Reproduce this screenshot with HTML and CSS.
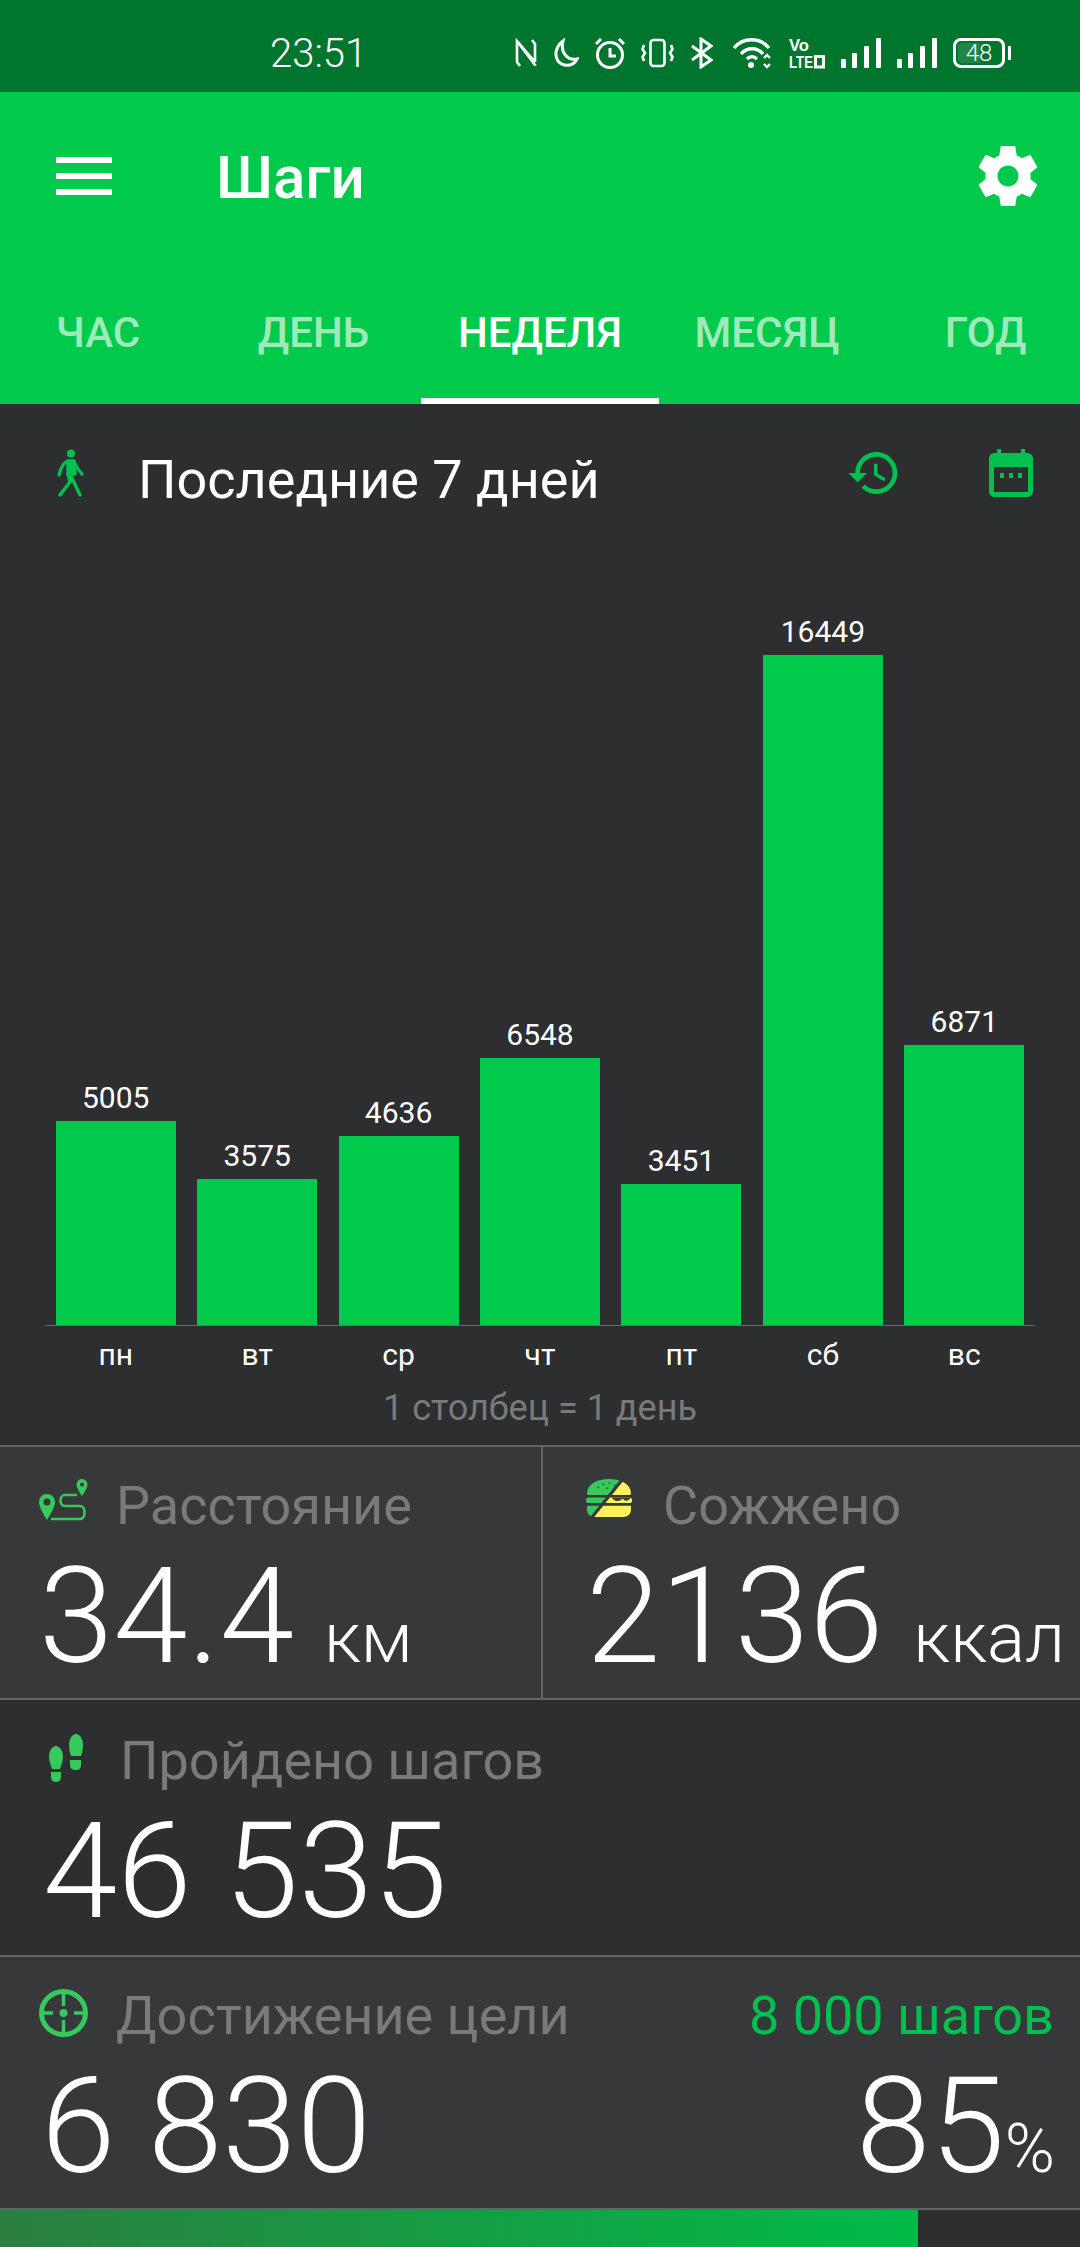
FILE: index.html
```html
<!DOCTYPE html>
<html>
<head>
  <title>Шаги</title>
  <meta charset="utf-8">
  <link rel="stylesheet" href="styles.css">
</head>
<body>
  <div class="status-bar">
    <span class="clock">23:51</span>
    <div class="status-icons">
      <svg width="22" height="30" viewBox="0 0 22 30" fill="none" stroke="#fff" stroke-width="2.6"><path d="M2 6 V24 L5 28 M2 3 L20 27 V28 M20 24 V6 L17 2 M2 8 V3 L20 24"/></svg>
      <svg width="26" height="30" viewBox="0 0 26 30" fill="none" stroke="#fff" stroke-width="3"><path d="M10 3 C3 8 1 17 5 23 C10 29 20 29 24 21 C15 23 7 15 10 3 Z"/></svg>
      <svg width="30" height="32" viewBox="0 0 30 32" fill="none" stroke="#fff" stroke-width="3"><circle cx="15" cy="18" r="12.5"/><path d="M15 11 V19 H21 M1 7 L6 2 M29 7 L24 2"/></svg>
      <svg width="33" height="30" viewBox="0 0 33 30" fill="none" stroke="#fff" stroke-width="2.6"><rect x="9.5" y="2" width="14" height="26" rx="3"/><path d="M3 7 L1.5 11 L4 15 L1.5 19 L3 23 M30 7 L31.5 11 L29 15 L31.5 19 L30 23"/></svg>
      <svg width="23" height="32" viewBox="0 0 23 32" fill="none" stroke="#fff" stroke-width="3"><path d="M2 9 L21 23 L11 30 V2 L21 9 L2 23"/></svg>
      <svg class="wifi-icon" width="40" height="32" viewBox="0 0 40 32" fill="none" stroke="#fff" stroke-width="3.4"><path d="M1 11 C10 0 27 0 36 11 M8 17 C14 10 24 10 30 17 M14 22 C17 19 21 19 24 22"/><circle cx="18" cy="28" r="3" fill="#fff" stroke="none"/><path d="M31 21 L34 18 L37 21 M31 27 L34 30 L37 27" stroke-width="2.4"/></svg>
      <svg width="36" height="40" viewBox="0 -4 36 40"><text x="0" y="14" class="volte" textLength="20" lengthAdjust="spacingAndGlyphs">Vo</text><text x="0" y="31" class="volte" textLength="24" lengthAdjust="spacingAndGlyphs">LTE</text><rect x="26.500" y="19.500" width="8" height="10.500" fill="none" stroke="#fff" stroke-width="3"/></svg>
      <svg width="40" height="32" viewBox="0 0 40 32" fill="#fff"><rect x="0" y="22" width="5" height="9" rx="1"/><rect x="11" y="16" width="5" height="15" rx="1"/><rect x="23" y="9" width="5" height="22" rx="1"/><rect x="35" y="1" width="5" height="30" rx="1"/></svg>
      <svg width="40" height="32" viewBox="0 0 40 32" fill="#fff"><rect x="0" y="22" width="5" height="9" rx="1"/><rect x="11" y="16" width="5" height="15" rx="1"/><rect x="23" y="9" width="5" height="22" rx="1"/><rect x="35" y="1" width="5" height="30" rx="1"/></svg>
      <div class="battery">
        <div class="battery-fill"></div>
        <span class="battery-level">48</span>
      </div>
    </div>
  </div>

  <header class="app-header">
    <div class="toolbar">
      <svg class="menu-icon" width="56" height="38" viewBox="0 0 56 38" fill="#fff"><rect y="0" width="56" height="6"/><rect y="16" width="56" height="6"/><rect y="32" width="56" height="6"/></svg>
      <h1 class="title">Шаги</h1>
      <svg class="gear-icon" width="72" height="72" viewBox="0 0 24 24" fill="#fff"><path d="M19.43 12.98c.04-.32.07-.64.07-.98s-.03-.66-.07-.98l2.11-1.65c.19-.15.24-.42.12-.64l-2-3.46c-.12-.22-.39-.3-.61-.22l-2.49 1c-.52-.4-1.08-.73-1.69-.98l-.38-2.65C14.46 2.18 14.25 2 14 2h-4c-.25 0-.46.18-.49.42l-.38 2.65c-.61.25-1.17.59-1.69.98l-2.49-1c-.23-.09-.49 0-.61.22l-2 3.46c-.13.22-.07.49.12.64l2.11 1.65c-.04.32-.07.65-.07.98s.03.66.07.98l-2.11 1.65c-.19.15-.24.42-.12.64l2 3.46c.12.22.39.3.61.22l2.49-1c.52.4 1.08.73 1.69.98l.38 2.65c.03.24.24.42.49.42h4c.25 0 .46-.18.49-.42l.38-2.65c.61-.25 1.17-.59 1.69-.98l2.49 1c.23.09.49 0 .61-.22l2-3.46c.12-.22.07-.49-.12-.64l-2.11-1.65zM12 15.5c-1.93 0-3.5-1.57-3.5-3.5s1.57-3.5 3.5-3.5 3.5 1.57 3.5 3.5-1.57 3.5-3.5 3.5z"/></svg>
    </div>
    <nav class="tabs">
      <a class="tab tab-hour">ЧАС</a>
      <a class="tab tab-day">ДЕНЬ</a>
      <a class="tab active">НЕДЕЛЯ</a>
      <a class="tab">МЕСЯЦ</a>
      <a class="tab tab-year">ГОД</a>
    </nav>
  </header>

  <section class="chart-panel">
    <div class="range-row">
      <svg class="walk-icon" width="28" height="48" viewBox="0 0 28 48" fill="none" stroke="#00c04f" stroke-width="3.400" stroke-linecap="round" stroke-linejoin="round"><circle cx="15" cy="4.500" r="4" fill="#00c04f" stroke="none"/><path d="M12 12 C8 13 5 18 3 26 M18 13 C20 16 22 21 26 25" stroke-width="3.200"/><path d="M12 12 H18 L19 25 L12 25 Z" fill="#00c04f"/><path d="M12 25 L14 33 L4 46 M15 27 L24 46"/></svg>
      <span class="range-title">Последние 7 дней</span>
      <svg class="history-icon" width="56" height="56" viewBox="0 0 24 24" fill="#00c04f"><path d="M13 3c-4.97 0-9 4.03-9 9H1l3.89 3.89.07.14L9 12H6c0-3.87 3.13-7 7-7s7 3.13 7 7-3.13 7-7 7c-1.93 0-3.68-.79-4.94-2.06l-1.42 1.42C8.27 19.99 10.51 21 13 21c4.97 0 9-4.03 9-9s-4.03-9-9-9zm-1 5v5l4.28 2.54.72-1.21-3.5-2.08V8H12z"/></svg>
      <svg class="calendar-icon" width="44" height="48" viewBox="0 0 44 48" fill="#00c04f"><rect x="2.500" y="6.500" width="39" height="39" rx="3" fill="none" stroke="#00c04f" stroke-width="5"/><rect x="2" y="6" width="40" height="12" rx="3"/><rect x="8" y="0" width="4" height="8"/><rect x="32" y="0" width="4" height="8"/><rect x="11" y="24" width="4" height="5"/><rect x="20" y="24" width="4" height="5"/><rect x="29" y="24" width="4" height="5"/></svg>
    </div>

    <div class="plot">
      <div class="col"><span class="bar-value">5005</span><div class="bar" style="height: 204px"></div></div>
      <div class="col"><span class="bar-value">3575</span><div class="bar" style="height: 146px"></div></div>
      <div class="col"><span class="bar-value">4636</span><div class="bar" style="height: 189px"></div></div>
      <div class="col"><span class="bar-value">6548</span><div class="bar" style="height: 267px"></div></div>
      <div class="col"><span class="bar-value">3451</span><div class="bar" style="height: 141px"></div></div>
      <div class="col"><span class="bar-value">16449</span><div class="bar" style="height: 670px"></div></div>
      <div class="col"><span class="bar-value">6871</span><div class="bar" style="height: 280px"></div></div>
    </div>
    <div class="days">
      <span>пн</span><span>вт</span><span>ср</span><span>чт</span><span>пт</span><span>сб</span><span>вс</span>
    </div>
    <p class="chart-note">1 столбец = 1 день</p>
  </section>

  <section class="stats">
    <div class="stats-row light split">
      <div class="tile tile-distance">
        <div class="tile-head">
          <svg class="tile-icon icon-route" width="49" height="42" viewBox="0 0 49 42" fill="none" stroke="#36c95c" stroke-width="2.600"><path fill-rule="evenodd" fill="#36c95c" stroke="none" d="M8 15 C3.500 15 0 18.500 0 23 C0 29 8 41 8 41 C8 41 16 29 16 23 C16 18.500 12.500 15 8 15 Z M8 19.500 A3.500 3.500 0 1 1 8 26.500 A3.500 3.500 0 1 1 8 19.500 Z"/><path fill-rule="evenodd" fill="#36c95c" stroke="none" d="M43 0 C40 0 37.500 2.500 37.500 5.500 C37.500 9.500 43 17 43 17 C43 17 48.500 9.500 48.500 5.500 C48.500 2.500 46 0 43 0 Z M43 3.500 A2 2 0 1 1 43 7.500 A2 2 0 1 1 43 3.500 Z"/><path d="M38 16 H26 C20 16 20 27 26 27 H41 C47 27 47 40 41 40 H12"/></svg>
          <span class="tile-label">Расстояние</span>
        </div>
        <div class="tile-value">34.4<small class="unit">км</small></div>
      </div>
      <div class="tile tile-burn">
        <div class="tile-head">
          <svg class="tile-icon icon-burger" width="46" height="38" viewBox="0 0 45 37">
            <defs>
              <g id="burger">
                <path d="M1 14 C1 5 11 0 22.500 0 C34 0 44 5 44 14 C44 15 43 15.500 42 15.500 H3 C2 15.500 1 15 1 14 Z"/>
                <rect x="0" y="18" width="45" height="5.500" rx="2.500"/>
                <path d="M1 26 H44 V30 C44 34 41 37 37 37 H8 C4 37 1 34 1 30 Z"/>
              </g>
              <clipPath id="burger-left"><polygon points="0,0 34,0 4,37 0,37"/></clipPath>
              <clipPath id="burger-right"><polygon points="38,0 45,0 45,37 8,37"/></clipPath>
            </defs>
            <use href="#burger" fill="#36c95c" clip-path="url(#burger-left)"/>
            <use href="#burger" fill="#fbf15b" clip-path="url(#burger-right)"/>
            <g fill="#2c5f38"><circle cx="12" cy="8" r="1"/><circle cx="17" cy="5" r="1"/><circle cx="23" cy="4" r="1"/><circle cx="21" cy="9" r="1"/><circle cx="28" cy="6" r="1"/></g>
            <path d="M25 18 C29 23 33 22 36 19 C38 22 41 22 44 18" fill="#37383a"/>
          </svg>
          <span class="tile-label">Сожжено</span>
        </div>
        <div class="tile-value">2136<small class="unit">ккал</small></div>
      </div>
    </div>

    <div class="stats-row stats-row-tall">
      <div class="tile tile-steps">
        <div class="tile-head">
          <svg class="tile-icon icon-feet" width="34" height="48" viewBox="0 0 34 48" fill="#36c95c"><path d="M7 12 C3 12 0 17 0 23 C0 28 2 31 3 35 H11 C12 31 14 28 14 23 C14 17 11 12 7 12 Z"/><path d="M2 38 H12 V43 C12 46 10 48 7 48 C4 48 2 46 2 43 Z"/><path d="M27 0 C23 0 20 5 20 11 C20 16 21 19 22 22 H32 C33 19 34 16 34 11 C34 5 31 0 27 0 Z"/><path d="M21 26 H32 V31 C32 34 30 36 27 36 C23 36 21 34 21 31 Z"/></svg>
          <span class="tile-label">Пройдено шагов</span>
        </div>
        <div class="tile-value">46 535</div>
      </div>
    </div>

    <div class="stats-row light">
      <div class="tile tile-goal">
        <div class="tile-head">
          <svg class="tile-icon icon-target" width="49" height="48" viewBox="0 0 49 48" fill="none" stroke="#36c95c" stroke-width="5"><ellipse cx="24.500" cy="24" rx="22" ry="21.500"/><path d="M24.500 3 V17 M24.500 31 V45 M3 24 H14 M35 24 H46" stroke-width="3.500"/><circle cx="24.500" cy="24" r="4" fill="#36c95c" stroke="none"/></svg>
          <span class="tile-label">Достижение цели</span>
          <span class="goal-target">8 000 шагов</span>
        </div>
        <div class="goal-values">
          <div class="tile-value goal-count">6 830</div>
          <div class="tile-value goal-percent">85<small class="percent">%</small></div>
        </div>
      </div>
    </div>
  </section>

  <div class="progress">
    <div class="progress-fill" style="width: 85%"></div>
  </div>
</body>
</html>
```

FILE: styles.css
```css
html, body {
  margin: 0;
  height: 2247px;
  overflow: hidden;
}

body {
  background-color: #2d2e30;
  color: white;
  font-family: Roboto, "Noto Sans", sans-serif;
}

/* Status bar */
.status-bar {
  height: 92px;
  background-color: #00752e;
  display: flex;
  align-items: center;
  padding-left: 270px;
  padding-right: 75px;
  box-sizing: border-box;
}

.clock {
  font-size: 40px;
  font-weight: 300;
  margin-top: 14px;
}

.status-icons {
  margin-left: auto;
  display: flex;
  align-items: center;
  gap: 16px;
  margin-top: 14px;
}

.wifi-icon {
  margin-left: 4px;
}

.volte {
  font-family: "Liberation Sans", sans-serif;
  font-size: 17px;
  font-weight: bold;
  fill: white;
}

.battery {
  position: relative;
  width: 46px;
  height: 24px;
  border: 3px solid white;
  border-radius: 8px;
  display: flex;
  align-items: center;
  justify-content: center;
}

.battery::after {
  content: "";
  position: absolute;
  right: -9px;
  top: 5px;
  width: 3px;
  height: 14px;
  background-color: white;
}

.battery-fill {
  position: absolute;
  left: 2px;
  top: 2px;
  bottom: 2px;
  width: 48%;
  background-color: #23844a;
  border-radius: 4px 0 0 4px;
}

.battery-level {
  position: relative;
  font-size: 24px;
  font-weight: 300;
}

/* Header and tabs */
.app-header {
  height: 312px;
  background-color: #00c94c;
}

.toolbar {
  height: 168px;
  display: flex;
  align-items: center;
  padding-left: 56px;
  padding-right: 36px;
}

.title {
  margin: 4px 0 0 104px;
  font-size: 60px;
  font-weight: 500;
  line-height: 68px;
}

.gear-icon {
  margin-left: auto;
}

.tabs {
  height: 144px;
  display: grid;
  grid-template-columns: 196px 225px 238px 216px 205px;
}

.tab {
  display: flex;
  align-items: center;
  justify-content: center;
  box-sizing: border-box;
  font-size: 42px;
  font-weight: 500;
  color: rgba(255, 255, 255, 0.65);
  padding-top: 7px;
  border-bottom: 6px solid transparent;
}

.tab.active {
  color: white;
  border-bottom-color: white;
}

.tab-day {
  padding-left: 10px;
}

.tab-year {
  padding-left: 16px;
}

/* Chart */
.chart-panel {
  height: 1041px;
}

.range-row {
  height: 156px;
  display: flex;
  align-items: flex-start;
  padding-left: 56px;
}

.walk-icon {
  margin-top: 45px;
}

.range-title {
  margin-left: 54px;
  margin-top: 46px;
  font-size: 54px;
  line-height: 60px;
}

.history-icon {
  margin-left: auto;
  margin-top: 41px;
}

.calendar-icon {
  margin-left: 87px;
  margin-right: 47px;
  margin-top: 45px;
}

.plot {
  height: 765px;
  margin: 0 45px;
  display: grid;
  grid-template-columns: repeat(7, 1fr);
  align-items: end;
  border-bottom: 1px solid #6a6a6a;
}

.col {
  display: flex;
  flex-direction: column;
  align-items: center;
}

.bar-value {
  font-size: 30px;
  line-height: 36px;
  margin-bottom: 5px;
}

.bar {
  width: 120px;
  background-color: #00c94c;
}

.days {
  margin: 9px 45px 0;
  display: grid;
  grid-template-columns: repeat(7, 1fr);
  font-size: 30px;
  line-height: 40px;
  text-align: center;
}

.chart-note {
  margin: 13px 0 0;
  font-size: 36px;
  line-height: 40px;
  text-align: center;
  color: #7a7a7a;
}

/* Stat tiles */
.stats-row {
  height: 253px;
  box-sizing: border-box;
  border-top: 2px solid #636466;
  display: flex;
}

.stats-row-tall {
  height: 257px;
}

.stats-row.light {
  background-color: #37383a;
}

.stats-row.split .tile + .tile {
  border-left: 2px solid #636466;
}

.tile {
  flex: 1;
  box-sizing: border-box;
  padding-top: 29px;
}

.tile-distance {
  flex: none;
  width: 541px;
  padding-left: 39px;
}

.tile-burn {
  padding-left: 43px;
}

.tile-steps {
  padding-left: 49px;
  padding-top: 31px;
}

.tile-goal {
  padding-left: 39px;
  padding-right: 26px;
}

.tile-head {
  height: 60px;
  display: flex;
  align-items: flex-start;
}

.tile-icon {
  margin-top: 3px;
  flex: none;
}

.tile-label {
  font-size: 54px;
  line-height: 60px;
  color: #7a7a7a;
}

.icon-route + .tile-label {
  margin-left: 28px;
}

.icon-burger + .tile-label {
  margin-left: 31px;
}

.icon-feet + .tile-label {
  margin-left: 37px;
}

.icon-target + .tile-label {
  margin-left: 28px;
}

.goal-target {
  margin-left: auto;
  font-size: 54px;
  line-height: 60px;
  color: #00c04f;
}

.tile-value {
  margin-top: 11px;
  font-size: 134px;
  font-weight: 300;
  line-height: 140px;
  white-space: nowrap;
}

.tile-steps .tile-value {
  margin-left: -6px;
}

.goal-count {
  margin-left: 2px;
}

.goal-percent {
  margin-right: -1px;
}

.unit {
  margin-left: 30px;
  font-size: 71px;
  font-weight: 300;
}

.goal-values {
  display: flex;
  justify-content: space-between;
}

.percent {
  font-size: 68px;
  font-weight: 300;
}

.progress {
  height: 39px;
  border-top: 2px solid #636466;
}

.progress-fill {
  height: 100%;
  background: linear-gradient(to right, #2b7f3f, #00bb48);
}
```
